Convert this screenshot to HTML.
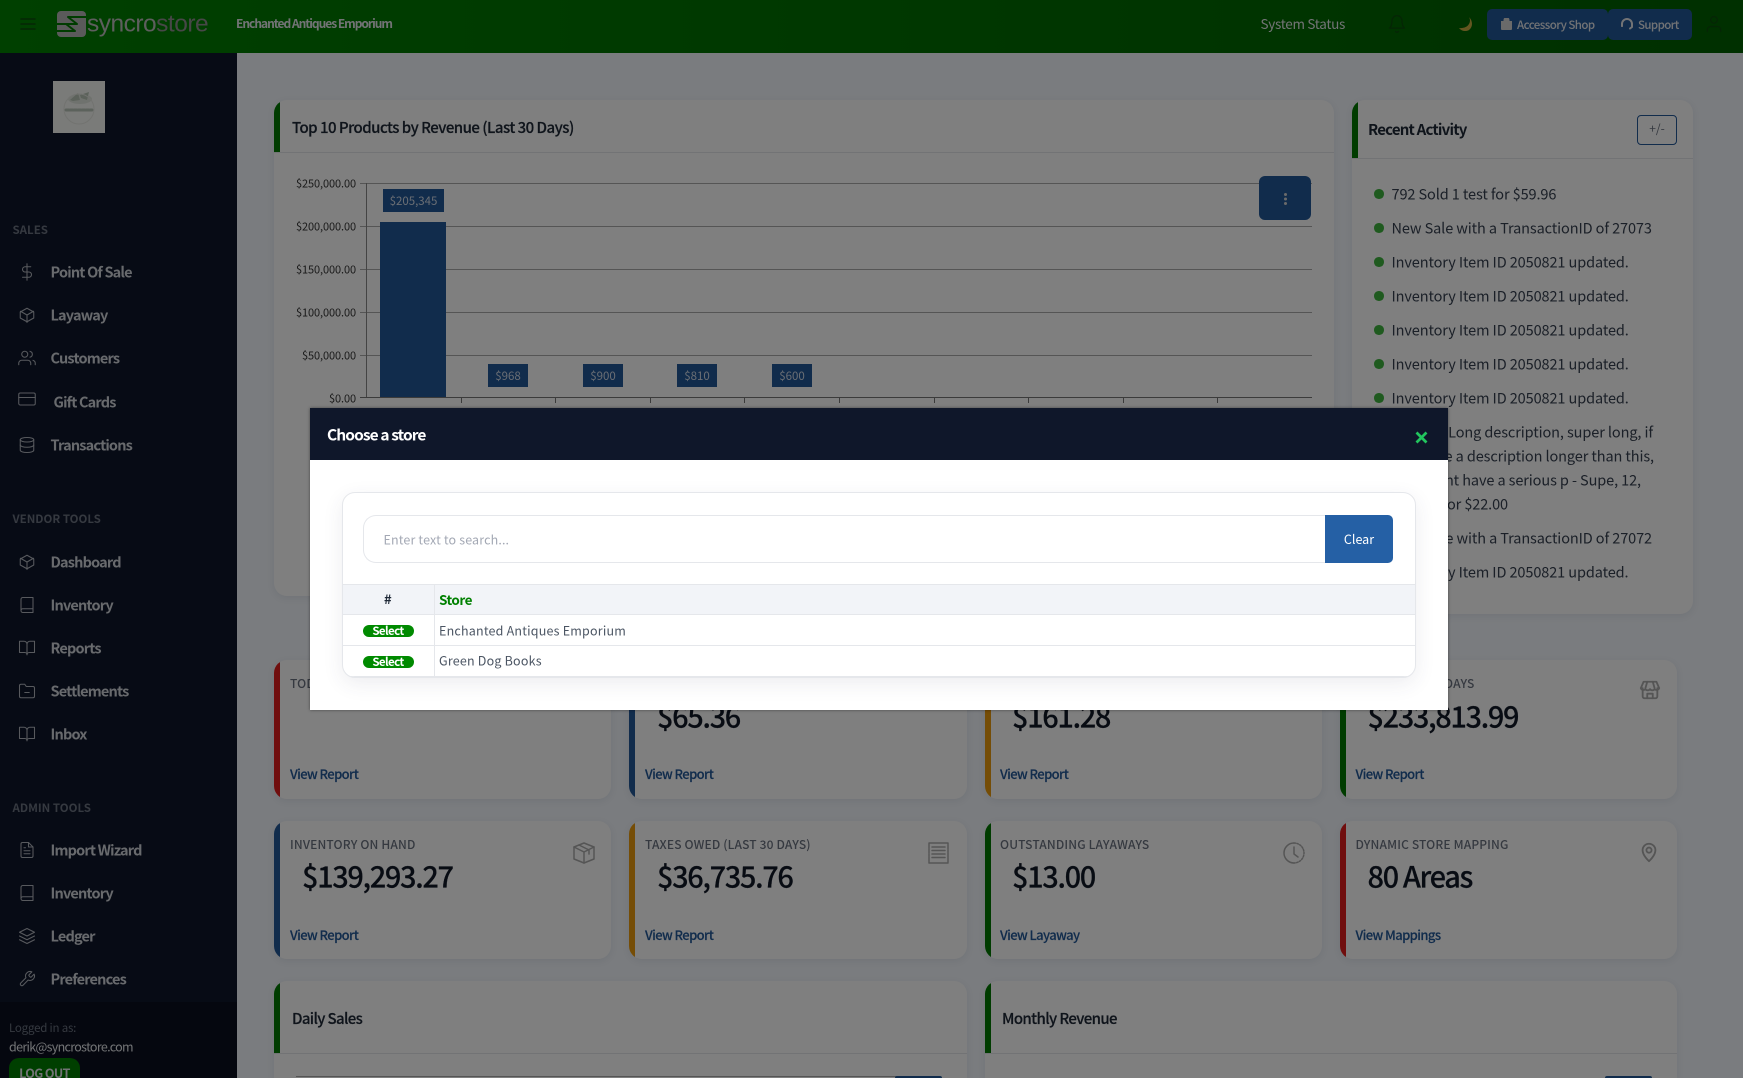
<!DOCTYPE html>
<html><head><meta charset="utf-8"><title>Syncrostore</title>
<style>
*{box-sizing:border-box}
html,body{margin:0;padding:0;width:1743px;height:1078px;overflow:hidden;background:#f4f8fe;font-family:"Noto Sans CJK JP","Liberation Sans",sans-serif;color:#374151}
#wrap{position:absolute;left:0;top:0;width:1743px;height:1078px;overflow:hidden;background:#f4f8fe}
.t{position:absolute;white-space:nowrap;transform:translateY(-50%);line-height:1.2}
.a{position:absolute}
svg{position:absolute;fill:none;stroke:currentColor;stroke-width:1.5;stroke-linecap:round;stroke-linejoin:round}
#hdr{left:0;top:0;width:1743px;height:53px;background:linear-gradient(90deg,#008000,#006000)}
#side{left:0;top:53px;width:237px;height:1025px;background:#0f172a}
#sidefoot{left:0;top:1002px;width:237px;height:76px;background:#0a0f1e}
.lab{font-size:11.5px;font-weight:700;color:#6b7280;left:12.5px}
.nav{font-size:14.5px;font-weight:700;color:#d1d5db;left:50.5px;letter-spacing:-.82px}
.ic{color:#b0b5bd;left:18px;width:18px;height:18px;stroke-width:1.4}
.card{position:absolute;background:#fff;border-radius:13px;box-shadow:0 2px 8px rgba(30,40,70,.08);overflow:hidden}
.bar{position:absolute;left:0;top:0;width:6px;height:100%}
.hl{position:absolute;left:0;width:100%;height:1px;background:#e5e7eb}
.ct{font-size:15px;font-weight:500;color:#1f2937;letter-spacing:-.52px;-webkit-text-stroke:.2px #1f2937}
.sl{font-size:12px;font-weight:500;color:#6b7280;letter-spacing:.15px}
.sv{font-size:29px;font-weight:500;color:#111827;letter-spacing:-1.4px;-webkit-text-stroke:.15px #111827}
.sk{font-size:13px;font-weight:500;color:#225898;letter-spacing:-.6px;-webkit-text-stroke:.15px #225898}
.si{color:#aaa}
.yl{font-size:11px;color:#333;right:1387px;text-align:right;letter-spacing:-.1px}
.grid{position:absolute;left:360px;width:952px;height:1px;background:#ababab}
.tick{position:absolute;top:397px;width:1px;height:6px;background:#777}
.dl{position:absolute;background:#225898;color:#d4dce8;font-size:11.5px;display:flex;align-items:center;justify-content:center;height:23px}
.dot{position:absolute;left:1374px;width:9.5px;height:9.5px;border-radius:50%;background:#3fb53f}
.ra{font-size:14.5px;color:#374151;left:1391.5px;letter-spacing:-.1px}
.rr{font-size:14.5px;color:#374151;letter-spacing:-.1px}
#ov{left:0;top:0;width:1743px;height:1078px;background:rgba(0,0,0,.5);z-index:10}
#modal{left:310px;top:408px;width:1138px;height:302px;background:#fff;z-index:20;box-shadow:0 0 3px rgba(0,0,0,.45)}
#mh{left:0;top:0;width:1138px;height:52px;background:#0f172a}
#inner{left:32px;top:84px;width:1074px;height:186px;background:#fff;border:1px solid #e5e7eb;border-radius:13px;box-shadow:0 6px 20px rgba(50,60,90,.09);overflow:hidden}
.sel{position:absolute;left:19.5px;width:51px;height:12px;border-radius:6px;background:#008a00;color:#fff;font-size:11.5px;font-weight:700;text-align:center;line-height:12px;letter-spacing:-.6px}
</style></head><body>
<div id="wrap">

<!-- header -->
<div class="a" id="hdr">
<svg style="left:19px;top:15px;color:#0b4a0b" width="18" height="18" viewBox="0 0 18 18"><path d="M2 4h14M2 9h14M2 14h14"/></svg>
<svg style="left:57px;top:11px" width="29" height="26" viewBox="0 0 29 26"><rect width="29" height="26" rx="4" fill="#b4b4b4" stroke="none"/><path d="M29 6H11l9 7H0M0 20h18l-9-7" stroke="#007800" stroke-width="2" stroke-linecap="butt"/></svg>
<div class="t" style="left:87px;top:24px;font-size:24.5px;color:#bcbcbc;letter-spacing:-.5px;font-family:'Liberation Sans',sans-serif">syncro<span style="color:#8e8e8e">store</span></div>
<div class="t" style="left:236px;top:24px;font-size:12px;font-weight:700;color:#e5e7eb;letter-spacing:-1.02px">Enchanted Antiques Emporium</div>
<div class="t" style="left:1260.5px;top:23px;font-size:13.5px;color:#e5e7eb;letter-spacing:-.3px">System Status</div>
<svg style="left:1387px;top:14px;color:#0b4a0b" width="20" height="20" viewBox="0 0 24 24"><path d="M18 8a6 6 0 0 0-12 0c0 7-3 9-3 9h18s-3-2-3-9"/><path d="M13.7 21a2 2 0 0 1-3.4 0"/></svg>
<svg style="left:1458px;top:17px;stroke:none" width="16" height="15" viewBox="0 0 16 15"><path fill="#c8ac40" d="M11 0C14 5 10 12 1 11 3 14 8 15 11 13 15 10 15 4 11 0z"/></svg>
<div class="a" style="left:1487px;top:9px;width:121px;height:31px;background:#225898;border-radius:5px"></div>
<div class="a" style="left:1608px;top:9px;width:84px;height:31px;background:#225898;border-radius:5px"></div>
<svg style="left:1501px;top:18px;stroke:none" width="11" height="12" viewBox="0 0 11 12"><path fill="#d4d4d4" d="M0 3h2.500V2a3 3 0 0 1 6 0v1H11v8a1 1 0 0 1-1 1H1a1 1 0 0 1-1-1z"/></svg>
<div class="t" style="left:1517px;top:25.5px;font-size:11.5px;font-weight:500;color:#e5e7eb;letter-spacing:-.55px">Accessory Shop</div>
<svg style="left:1621px;top:18px;color:#e5e7eb;stroke-width:2" width="12" height="12" viewBox="0 0 12 12"><path d="M1 8V6a5 5 0 0 1 10 0v2"/><path d="M1 7v1M11 7v2l-2 1.500"/></svg>
<div class="t" style="left:1638px;top:25.500px;font-size:11.5px;font-weight:500;color:#e5e7eb;letter-spacing:-.6px">Support</div>
<svg style="left:1704px;top:14px;color:#0b4a0b" width="20" height="20" viewBox="0 0 24 24"><path d="M20 21v-2a4 4 0 0 0-4-4H8a4 4 0 0 0-4 4v2"/><circle cx="12" cy="7" r="4"/></svg>
</div>

<!-- sidebar -->
<div class="a" id="side"></div>
<div class="a" id="sidefoot"></div>
<svg style="left:53px;top:81px;stroke:none" width="52" height="52" viewBox="0 0 52 52"><rect width="52" height="52" fill="#f5f6f3"/><ellipse cx="27" cy="18" rx="12" ry="5" fill="#dfe5dc"/><path fill="#b8c4b6" d="M17 19l8-7 2 7-7 1zM27 14l9-3-2 8-6-2z"/><path d="M13 29h26" stroke="#b8c4b8" stroke-width="3" stroke-dasharray="3 1"/><circle cx="26" cy="28" r="15" fill="none" stroke="#e4e6e0" stroke-width="1"/></svg>

<div class="t lab" style="top:231px">SALES</div>
<div class="t lab" style="top:520px">VENDOR TOOLS</div>
<div class="t lab" style="top:809px">ADMIN TOOLS</div>

<div class="t nav" style="top:272px">Point Of Sale</div>
<div class="t nav" style="top:315px">Layaway</div>
<div class="t nav" style="top:358px">Customers</div>
<div class="t nav" style="top:402px;left:53.5px">Gift Cards</div>
<div class="t nav" style="top:445px">Transactions</div>
<div class="t nav" style="top:562px">Dashboard</div>
<div class="t nav" style="top:605px">Inventory</div>
<div class="t nav" style="top:648px">Reports</div>
<div class="t nav" style="top:691px">Settlements</div>
<div class="t nav" style="top:734px">Inbox</div>
<div class="t nav" style="top:850px">Import Wizard</div>
<div class="t nav" style="top:893px">Inventory</div>
<div class="t nav" style="top:936px">Ledger</div>
<div class="t nav" style="top:979px">Preferences</div>

<svg class="ic" style="top:263px" viewBox="0 0 24 24"><path d="M12 1v22"/><path d="M17 5H9.500a3.500 3.500 0 0 0 0 7h5a3.500 3.500 0 0 1 0 7H6"/></svg>
<svg class="ic" style="top:306px" viewBox="0 0 24 24"><path d="M21 16V8l-9-5-9 5v8l9 5 9-5z"/><path d="M3.300 7L12 12l8.700-5M12 22V12"/></svg>
<svg class="ic" style="top:349px" viewBox="0 0 24 24"><path d="M17 21v-2a4 4 0 0 0-4-4H5a4 4 0 0 0-4 4v2"/><circle cx="9" cy="7" r="4"/><path d="M23 21v-2a4 4 0 0 0-3-3.900M16 3.100a4 4 0 0 1 0 7.800"/></svg>
<svg class="ic" style="top:390px" viewBox="0 0 24 24"><rect x="1" y="4" width="22" height="16" rx="2"/><path d="M1 10h22"/></svg>
<svg class="ic" style="top:436px" viewBox="0 0 24 24"><ellipse cx="12" cy="5" rx="9" ry="3"/><path d="M21 12c0 1.700-4 3-9 3s-9-1.300-9-3"/><path d="M3 5v14c0 1.700 4 3 9 3s9-1.300 9-3V5"/></svg>
<svg class="ic" style="top:553px" viewBox="0 0 24 24"><path d="M21 16V8l-9-5-9 5v8l9 5 9-5z"/><path d="M3.300 7L12 12l8.700-5M12 22V12"/></svg>
<svg class="ic" style="top:596px" viewBox="0 0 24 24"><path d="M4 19.500A2.500 2.500 0 0 1 6.500 17H20"/><path d="M6.500 2H20v20H6.500A2.500 2.500 0 0 1 4 19.500v-15A2.500 2.500 0 0 1 6.500 2z"/></svg>
<svg class="ic" style="top:639px" viewBox="0 0 24 24"><path d="M2 3h6a4 4 0 0 1 4 4v14a3 3 0 0 0-3-3H2z"/><path d="M22 3h-6a4 4 0 0 0-4 4v14a3 3 0 0 1 3-3h7z"/></svg>
<svg class="ic" style="top:682px" viewBox="0 0 24 24"><path d="M22 19a2 2 0 0 1-2 2H4a2 2 0 0 1-2-2V5a2 2 0 0 1 2-2h5l2 3h9a2 2 0 0 1 2 2z"/><path d="M9 14h6"/></svg>
<svg class="ic" style="top:725px" viewBox="0 0 24 24"><path d="M2 3h6a4 4 0 0 1 4 4v14a3 3 0 0 0-3-3H2z"/><path d="M22 3h-6a4 4 0 0 0-4 4v14a3 3 0 0 1 3-3h7z"/></svg>
<svg class="ic" style="top:841px" viewBox="0 0 24 24"><path d="M14 2H6a2 2 0 0 0-2 2v16a2 2 0 0 0 2 2h12a2 2 0 0 0 2-2V8z"/><path d="M14 2v6h6M16 13H8M16 17H8M10 9H8"/></svg>
<svg class="ic" style="top:884px" viewBox="0 0 24 24"><path d="M4 19.500A2.500 2.500 0 0 1 6.500 17H20"/><path d="M6.500 2H20v20H6.500A2.500 2.500 0 0 1 4 19.500v-15A2.500 2.500 0 0 1 6.500 2z"/></svg>
<svg class="ic" style="top:927px" viewBox="0 0 24 24"><path d="M12 2L2 7l10 5 10-5-10-5zM2 17l10 5 10-5M2 12l10 5 10-5"/></svg>
<svg class="ic" style="top:970px" viewBox="0 0 24 24"><path d="M14.700 6.300a1 1 0 0 0 0 1.400l1.600 1.600a1 1 0 0 0 1.400 0l3.800-3.800a6 6 0 0 1-7.900 7.900l-6.900 6.900a2.100 2.100 0 0 1-3-3l6.900-6.900a6 6 0 0 1 7.900-7.900z"/></svg>

<div class="t" style="left:9px;top:1028.500px;font-size:11.5px;color:#6b7280;letter-spacing:-.2px">Logged in as:</div>
<div class="t" style="left:9px;top:1046px;font-size:12.5px;color:#e5e7eb;letter-spacing:-.68px">derik@syncrostore.com</div>
<div class="a" style="left:9px;top:1058px;width:71px;height:30px;border-radius:10px;background:#007e00;color:#e5e7eb;font-size:12.5px;font-weight:700;text-align:center;line-height:30px;letter-spacing:-.6px">LOG OUT</div>

<!-- top chart card -->
<div class="card" style="left:274px;top:100px;width:1060px;height:496px"><div class="bar" style="height:52px;background:#007800"></div><div class="hl" style="top:52px"></div></div>
<div class="t ct" style="left:292px;top:127.500px">Top 10 Products by Revenue (Last 30 Days)</div>
<div class="grid" style="top:183px"></div><div class="grid" style="top:226px"></div><div class="grid" style="top:269px"></div><div class="grid" style="top:312px"></div><div class="grid" style="top:355px"></div><div class="grid" style="top:397px;background:#777"></div>
<div class="a" style="left:366px;top:183px;width:1px;height:214px;background:#888"></div>
<div class="tick" style="left:461px"></div><div class="tick" style="left:555px"></div><div class="tick" style="left:650px"></div><div class="tick" style="left:744px"></div><div class="tick" style="left:839px"></div><div class="tick" style="left:934px"></div><div class="tick" style="left:1028px"></div><div class="tick" style="left:1123px"></div><div class="tick" style="left:1217px"></div>
<div class="t yl" style="top:184px">$250,000.00</div><div class="t yl" style="top:227px">$200,000.00</div><div class="t yl" style="top:270px">$150,000.00</div><div class="t yl" style="top:313px">$100,000.00</div><div class="t yl" style="top:356px">$50,000.00</div><div class="t yl" style="top:399px">$0.00</div>
<div class="a" style="left:380px;top:222px;width:66px;height:175px;background:#225898"></div>
<div class="dl" style="left:383px;top:189px;width:61px">$205,345</div>
<div class="dl" style="left:488px;top:364px;width:40px">$968</div>
<div class="dl" style="left:583px;top:364px;width:40px">$900</div>
<div class="dl" style="left:677px;top:364px;width:40px">$810</div>
<div class="dl" style="left:772px;top:364px;width:40px">$600</div>
<div class="a" style="left:1259px;top:176px;width:52px;height:44px;background:#225898;border-radius:6px"></div>
<div class="a" style="left:1284px;top:193px;width:3px;height:3px;border-radius:50%;background:#d4d4d4;box-shadow:0 4.500px 0 #d4d4d4,0 9px 0 #d4d4d4"></div>

<!-- recent activity -->
<div class="card" style="left:1352px;top:100px;width:341px;height:514px"><div class="bar" style="height:58px;background:#007800"></div><div class="hl" style="top:58px"></div></div>
<div class="t ct" style="left:1368px;top:130px;letter-spacing:-.8px;font-weight:700;-webkit-text-stroke:0">Recent Activity</div>
<div class="a" style="left:1637px;top:114.500px;width:40px;height:30px;border:1.5px solid #225898;border-radius:4px;font-size:12px;color:#6b7280;text-align:center;line-height:26px">+/-</div>
<div class="dot" style="top:189px"></div><div class="t ra" style="top:193.500px">792 Sold 1 test for $59.96</div>
<div class="dot" style="top:223px"></div><div class="t ra" style="top:227.500px">New Sale with a TransactionID of 27073</div>
<div class="dot" style="top:257px"></div><div class="t ra" style="top:261.500px">Inventory Item ID 2050821 updated.</div>
<div class="dot" style="top:291px"></div><div class="t ra" style="top:295.500px">Inventory Item ID 2050821 updated.</div>
<div class="dot" style="top:325px"></div><div class="t ra" style="top:329.500px">Inventory Item ID 2050821 updated.</div>
<div class="dot" style="top:359px"></div><div class="t ra" style="top:363.500px">Inventory Item ID 2050821 updated.</div>
<div class="dot" style="top:393px"></div><div class="t ra" style="top:397.500px">Inventory Item ID 2050821 updated.</div>
<div class="t rr" style="right:90px;top:431.500px">Item Long description, super long, if</div>
<div class="t rr" style="right:89px;top:455.500px">have a description longer than this,</div>
<div class="t rr" style="right:102px;top:479.500px">might have a serious p - Supe, 12,</div>
<div class="t rr" style="right:235px;top:503.500px">sold for $22.00</div>
<div class="t rr" style="right:91px;top:537.500px">New Sale with a TransactionID of 27072</div>
<div class="t rr" style="right:114.500px;top:571.500px">Inventory Item ID 2050821 updated.</div>

<!-- stat cards -->
<div class="card" style="left:274px;top:660px;width:336.500px;height:139px"><div class="bar" style="background:#e11d1d"></div></div>
<div class="card" style="left:629px;top:660px;width:337.500px;height:139px"><div class="bar" style="background:#225898"></div></div>
<div class="card" style="left:985px;top:660px;width:336.500px;height:139px"><div class="bar" style="background:#eb9a0c"></div></div>
<div class="card" style="left:1340px;top:660px;width:337px;height:139px"><div class="bar" style="background:#007800"></div></div>
<div class="card" style="left:274px;top:821px;width:336.500px;height:138px"><div class="bar" style="background:#225898"></div></div>
<div class="card" style="left:629px;top:821px;width:337.500px;height:138px"><div class="bar" style="background:#eb9a0c"></div></div>
<div class="card" style="left:985px;top:821px;width:336.500px;height:138px"><div class="bar" style="background:#007800"></div></div>
<div class="card" style="left:1340px;top:821px;width:337px;height:138px"><div class="bar" style="background:#e11d1d"></div></div>

<div class="t sl" style="left:290px;top:683.500px">TODAY</div>
<div class="t sl" style="right:268.500px;top:683.500px">REVENUE 30 DAYS</div>
<div class="t sv" style="left:657px;top:716px">$65.36</div>
<div class="t sv" style="left:1012px;top:716px">$161.28</div>
<div class="t sv" style="left:1367.500px;top:716px">$233,813.99</div>
<div class="t sk" style="left:290px;top:774px">View Report</div><div class="t sk" style="left:645px;top:774px">View Report</div><div class="t sk" style="left:1000px;top:774px">View Report</div><div class="t sk" style="left:1355.500px;top:774px">View Report</div>
<svg class="si" style="left:1639px;top:679px;stroke-width:2" width="22" height="22" viewBox="0 0 24 24"><path d="M4 10v9a2 2 0 0 0 2 2h12a2 2 0 0 0 2-2v-9"/><path d="M5 3h14l3 7a3 3 0 0 1-5 1 3 3 0 0 1-5 0 3 3 0 0 1-5 0 3 3 0 0 1-5-1z"/><path d="M9 21v-5h6v5M9 3L7 10M15 3l2 7"/></svg>

<div class="t sl" style="left:290px;top:844.500px">INVENTORY ON HAND</div>
<div class="t sl" style="left:645px;top:844.500px">TAXES OWED (LAST 30 DAYS)</div>
<div class="t sl" style="left:1000px;top:844.500px">OUTSTANDING LAYAWAYS</div>
<div class="t sl" style="left:1355.500px;top:844.500px">DYNAMIC STORE MAPPING</div>
<div class="t sv" style="left:302px;top:876px">$139,293.27</div>
<div class="t sv" style="left:657px;top:876px">$36,735.76</div>
<div class="t sv" style="left:1012px;top:876px">$13.00</div>
<div class="t sv" style="left:1367.500px;top:876px">80 Areas</div>
<div class="t sk" style="left:290px;top:935px">View Report</div><div class="t sk" style="left:645px;top:935px">View Report</div><div class="t sk" style="left:1000px;top:935px">View Layaway</div><div class="t sk" style="left:1355.500px;top:935px">View Mappings</div>
<svg class="si" style="left:572px;top:841px" width="24" height="24" viewBox="0 0 24 24"><path d="M12 2l10 4v12l-10 4-10-4V6z"/><path d="M2 6l10 5 10-5M12 11v11M7 4l10 5v4"/></svg>
<svg class="si" style="left:928px;top:842px" width="21" height="22" viewBox="0 0 21 22"><rect x="1" y="1" width="19" height="20" stroke-dasharray="2 .6"/><path d="M4 5h13M4 8.500h13M4 12h13M4 15.500h13"/></svg>
<svg class="si" style="left:1282px;top:841px" width="24" height="24" viewBox="0 0 24 24"><path d="M12 2a10 10 0 0 0 0 20" /><path d="M12 2a10 10 0 0 1 0 20" stroke-dasharray="1.500 1.500"/><path d="M12 6v7l4 3"/></svg>
<svg class="si" style="left:1638px;top:841px;stroke-width:2" width="22" height="22" viewBox="0 0 24 24"><path d="M19 10c0 6-7 12-7 12s-7-6-7-12a7 7 0 0 1 14 0z"/><circle cx="12" cy="10" r="2.800"/></svg>

<!-- bottom -->
<div class="card" style="left:274px;top:981px;width:692.500px;height:97px;border-radius:13px 13px 0 0"><div class="bar" style="height:72px;background:#007800"></div><div class="hl" style="top:72px"></div></div>
<div class="card" style="left:985px;top:981px;width:692px;height:97px;border-radius:13px 13px 0 0"><div class="bar" style="height:72px;background:#007800"></div><div class="hl" style="top:72px"></div></div>
<div class="t ct" style="left:292px;top:1018.500px;letter-spacing:-.65px">Daily Sales</div>
<div class="t ct" style="left:1002px;top:1018.500px;letter-spacing:-.62px">Monthly Revenue</div>
<div class="a" style="left:296px;top:1076px;width:640px;height:1px;background:#aaa"></div>
<div class="a" style="left:895px;top:1076px;width:47px;height:2px;background:#225898;border-radius:2px 2px 0 0"></div>
<div class="a" style="left:1605px;top:1076px;width:47px;height:2px;background:#225898;border-radius:2px 2px 0 0"></div>

<div class="a" id="ov"></div>

<!-- modal -->
<div class="a" id="modal">
<div class="a" id="mh"></div>
<div class="t" style="left:17px;top:27px;font-size:15.5px;font-weight:700;color:#fff;letter-spacing:-.9px">Choose a store</div>
<svg style="left:1105px;top:22.500px;color:#22c55e;stroke-width:2.700;stroke-linecap:butt" width="13" height="13" viewBox="0 0 13 13"><path d="M1.500 1.500l10 10M11.500 1.500l-10 10"/></svg>
<div class="a" id="inner">
<div class="a" style="left:20px;top:22px;width:970px;height:48px;border:1px solid #e5e7eb;border-right:0;border-radius:13px 0 0 13px"></div>
<div class="t" style="left:40.500px;top:46px;font-size:12.5px;color:#a3a8b4;letter-spacing:.14px">Enter text to search...</div>
<div class="a" style="left:982px;top:22px;width:68px;height:48px;background:#2560a5;border-radius:0 5px 5px 0;color:#fff;font-size:12.5px;text-align:center;line-height:48px">Clear</div>
<div class="a" style="left:0;top:91px;width:100%;height:31px;background:#f2f4f8;border-top:1px solid #e5e7eb;border-bottom:1px solid #e5e7eb"></div>
<div class="a" style="left:0;top:152px;width:100%;height:1px;background:#e5e7eb"></div>
<div class="a" style="left:91px;top:91px;width:1px;height:95px;background:#e5e7eb"></div>
<div class="a" style="left:0;bottom:0;width:100%;height:1px;background:#e5e7eb"></div>
<div class="t" style="left:41px;top:106px;font-size:13px;font-weight:700;color:#1f2937">#</div>
<div class="t" style="left:96px;top:106px;font-size:13.5px;font-weight:700;color:#008000;letter-spacing:-.5px">Store</div>
<div class="sel" style="top:132px">Select</div>
<div class="t" style="left:96px;top:136.500px;font-size:12.5px;color:#4b5563;letter-spacing:.2px">Enchanted Antiques Emporium</div>
<div class="sel" style="top:163px">Select</div>
<div class="t" style="left:96px;top:167px;font-size:12.5px;color:#4b5563;letter-spacing:.2px">Green Dog Books</div>
</div>
</div>
</div>
</body></html>
